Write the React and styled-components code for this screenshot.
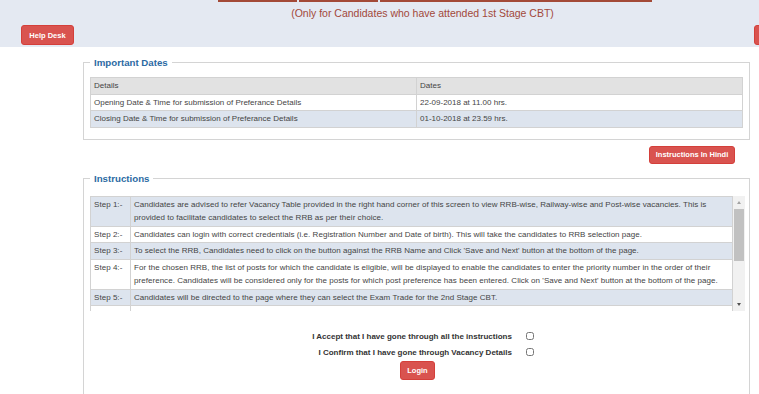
import styled, { createGlobalStyle } from 'styled-components';

const GlobalStyle = createGlobalStyle`
  html, body {
    margin: 0;
    padding: 0;
    background: #fff;
    overflow: hidden;
    font-family: "Liberation Sans", Arial, sans-serif;
    color: #333;
  }
`;

// --- header ---
const Header = styled.div`
  background: #e4e9f2;
  height: 47px;
  overflow: hidden;
`;

const TopBars = styled.div`
  display: flex;
  gap: 2px;
  padding-left: 218px;
  height: 2px;
`;

const TopBar = styled.div`
  width: ${(p) => p.w}px;
  background: #a34a38;
`;

const Subtitle = styled.div`
  text-align: center;
  font-size: 10.5px;
  color: #a2483a;
  margin-top: 5px;
  padding-left: 86px;
  line-height: 12px;
`;

const HeaderRow = styled.div`
  display: flex;
  justify-content: space-between;
  padding-left: 21px;
  margin-right: -40px;
  margin-top: 6px;
`;

const RedButton = styled.button`
  background: #d9534f;
  color: #fff;
  border: 1px solid #d43f3a;
  border-radius: 3px;
  font-family: "Liberation Sans", Arial, sans-serif;
  font-size: 7.5px;
  font-weight: bold;
  height: ${(p) => p.h || 18}px;
  width: ${(p) => p.w}px;
  padding: 0;
  cursor: pointer;
`;

// --- content ---
const Main = styled.div`
  padding-left: 83px;
  width: 667px;
  padding-top: 10px;
`;

const FieldSet = styled.fieldset`
  margin: 0;
  border: 1px solid #d4d4d4;
  padding: ${(p) => p.pad};
  min-width: 0;
`;

const Legend = styled.legend`
  font-size: 9.7px;
  font-weight: bold;
  color: #2b6aa3;
  padding: 0 4px;
  margin-left: 0;
`;

const Table = styled.table`
  width: 100%;
  border-collapse: collapse;
  font-size: 8px;
  letter-spacing: ${(p) => p.ls || 0}px;
  color: #444;
  table-layout: fixed;
`;

const Cell = styled.td`
  border: 1px solid #d2d2d2;
  padding: 1px 3px;
  line-height: 13.5px;
  vertical-align: top;
  background: ${(p) => (p.tone === 'head' ? '#e2e2e2' : p.tone === 'blue' ? '#dde4ee' : '#fff')};
`;

const ButtonRow = styled.div`
  display: flex;
  justify-content: flex-end;
  padding: 6px 15px 9px 0;
`;

const ScrollArea = styled.div`
  display: flex;
  height: 115px;
  margin-top: 9px;
`;

const Viewport = styled.div`
  flex: 1;
  overflow: hidden;
`;

const Scrollbar = styled.div`
  width: 12px;
  background: #f1f1f1;
  display: flex;
  flex-direction: column;
  align-items: center;
`;

const Arrow = styled.div`
  width: 0;
  height: 0;
  margin: 5px 0;
  border-left: 2.5px solid transparent;
  border-right: 2.5px solid transparent;
  ${(p) => (p.down ? 'border-top: 3px solid #505050;' : 'border-bottom: 3px solid #a3a3a3;')}
`;

const Thumb = styled.div`
  width: 10px;
  height: 52px;
  background: #c1c1c1;
`;

const Spacer = styled.div`
  flex: 1;
`;

const Agree = styled.div`
  display: grid;
  grid-template-columns: auto 30px;
  justify-content: center;
  align-items: center;
  row-gap: 5px;
  margin: 20px 0 0 19px;
`;

const AgreeLabel = styled.label`
  font-size: 8px;
  font-weight: bold;
  color: #333;
  text-align: right;
  line-height: 11px;
`;

const Check = styled.input`
  width: 8px;
  height: 8px;
  margin: 0 0 0 14px;
`;

const LoginRow = styled.div`
  display: flex;
  justify-content: center;
  margin-top: 3px;
  height: 40px;
`;

const dates = [
  ['Opening Date & Time for submission of Preferance Details', '22-09-2018 at 11.00 hrs.', 'white'],
  ['Closing Date & Time for submission of Preferance Details', '01-10-2018 at 23.59 hrs.', 'blue'],
];

const steps = [
  ['Step 1:-', 'Candidates are advised to refer Vacancy Table provided in the right hand corner of this screen to view RRB-wise, Railway-wise and Post-wise vacancies. This is provided to facilitate candidates to select the RRB as per their choice.'],
  ['Step 2:-', 'Candidates can login with correct credentials (i.e. Registration Number and Date of birth). This will take the candidates to RRB selection page.'],
  ['Step 3:-', "To select the RRB, Candidates need to click on the button against the RRB Name and Click 'Save and Next' button at the bottom of the page."],
  ['Step 4:-', "For the chosen RRB, the list of posts for which the candidate is eligible, will be displayed to enable the candidates to enter the priority number in the order of their preference. Candidates will be considered only for the posts for which post preference has been entered. Click on 'Save and Next' button at the bottom of the page."],
  ['Step 5:-', 'Candidates will be directed to the page where they can select the Exam Trade for the 2nd Stage CBT.'],
  ['Step 6:-', 'In case of candidates with only ITI qualification, the exam trade as per their ITI trade will be displayed for confirmation. For other candidates, all the relevant trades for which they are eligible will be displayed for selection.'],
];

const App = () => (
  <>
    <GlobalStyle />
    <Header>
      <TopBars>
        <TopBar w={79} />
        <TopBar w={79} />
        <TopBar w={272} />
      </TopBars>
      <Subtitle>(Only for Candidates who have attended 1st Stage CBT)</Subtitle>
      <HeaderRow>
        <RedButton w={53} h={20}>Help Desk</RedButton>
        <RedButton w={45} h={20}>&nbsp;</RedButton>
      </HeaderRow>
    </Header>

    <Main>
      <FieldSet pad="9px 6px 11px 6px">
        <Legend>Important Dates</Legend>
        <Table>
          <colgroup>
            <col style={{ width: 326 }} />
            <col />
          </colgroup>
          <tbody>
            <tr>
              <Cell tone="head">Details</Cell>
              <Cell tone="head">Dates</Cell>
            </tr>
            {dates.map(([d, t, tone]) => (
              <tr key={d}>
                <Cell tone={tone}>{d}</Cell>
                <Cell tone={tone}>{t}</Cell>
              </tr>
            ))}
          </tbody>
        </Table>
      </FieldSet>

      <ButtonRow>
        <RedButton w={86}>Instructions In Hindi</RedButton>
      </ButtonRow>

      <FieldSet pad="3px 4px 0 6px">
        <Legend>Instructions</Legend>
        <ScrollArea>
          <Viewport>
            <Table ls={0.04}>
              <colgroup>
                <col style={{ width: 40 }} />
                <col />
              </colgroup>
              <tbody>
                {steps.map(([s, text], i) => (
                  <tr key={s}>
                    <Cell tone={i % 2 === 0 ? 'blue' : 'white'}>{s}</Cell>
                    <Cell tone={i % 2 === 0 ? 'blue' : 'white'}>{text}</Cell>
                  </tr>
                ))}
              </tbody>
            </Table>
          </Viewport>
          <Scrollbar>
            <Arrow />
            <Thumb />
            <Spacer />
            <Arrow down />
          </Scrollbar>
        </ScrollArea>
        <Agree>
          <AgreeLabel htmlFor="acc">I Accept that I have gone through all the instructions</AgreeLabel>
          <Check type="checkbox" id="acc" />
          <AgreeLabel htmlFor="conf">I Confirm that I have gone through Vacancy Details</AgreeLabel>
          <Check type="checkbox" id="conf" />
        </Agree>
        <LoginRow>
          <RedButton w={35} h={19}>Login</RedButton>
        </LoginRow>
      </FieldSet>
    </Main>
  </>
);

export default App;
